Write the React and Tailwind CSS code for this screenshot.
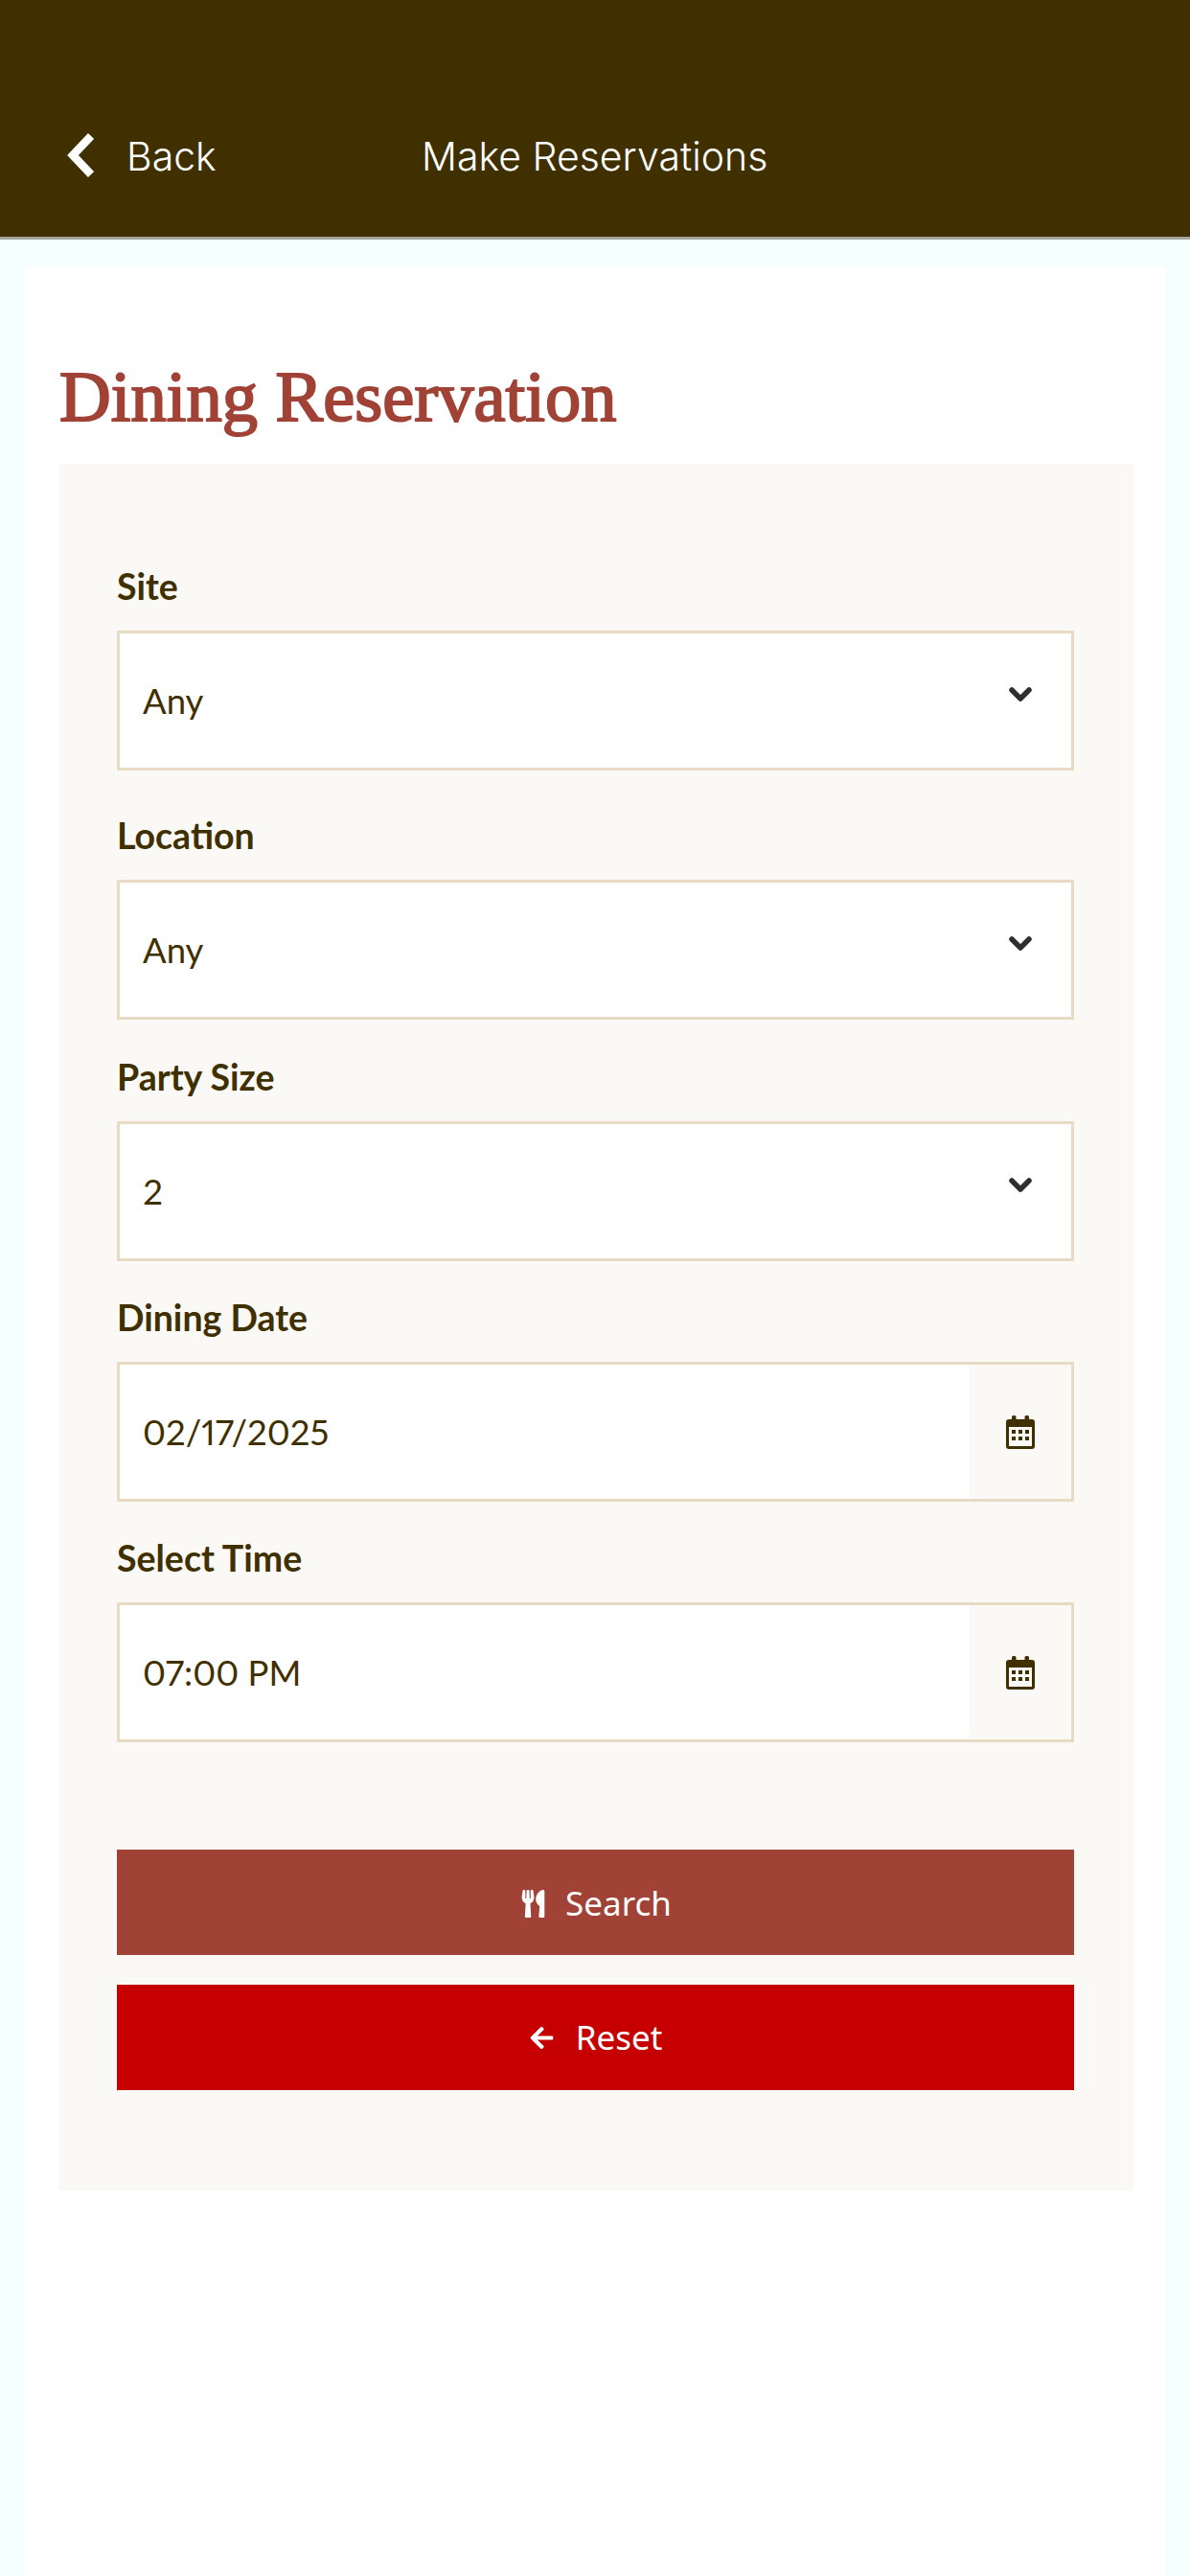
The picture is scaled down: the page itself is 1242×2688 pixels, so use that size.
import React from 'react';
import { FaArrowLeft, FaUtensils } from 'react-icons/fa';

const CalendarIcon = () => (
  <svg width="30" height="35" viewBox="0 0 30 35" className="text-[#403000]" fill="currentColor">
    <rect x="6" y="0" width="4.5" height="7" rx="1.5" />
    <rect x="19.5" y="0" width="4.5" height="7" rx="1.5" />
    <path fillRule="evenodd" d="M3 4h24a3 3 0 0 1 3 3v25a3 3 0 0 1-3 3H3a3 3 0 0 1-3-3V7a3 3 0 0 1 3-3Zm0 8v20h24V12Z" />
    <rect x="6" y="15" width="4" height="4" />
    <rect x="13" y="15" width="4" height="4" />
    <rect x="20" y="15" width="4" height="4" />
    <rect x="6" y="22" width="4" height="4" />
    <rect x="13" y="22" width="4" height="4" />
    <rect x="20" y="22" width="4" height="4" />
  </svg>
);

const SelectField = ({ label, value, className }) => (
  <div className={className}>
    <label className="block h-9 mb-[28px] text-[37.5px] leading-9 font-bold text-[#403000] font-['Lato',sans-serif]">{label}</label>
    <div className="relative">
      <select
        defaultValue={value}
        className="appearance-none block w-full h-[146px] pl-[24px] bg-white border-[3px] border-[#e8dac3] rounded-none text-[36.5px] text-[#403000] font-['Lato',sans-serif] outline-none"
      >
        <option>{value}</option>
      </select>
      <svg width="24" height="16" viewBox="0 0 24 16" className="absolute right-[44px] top-[59px] pointer-events-none">
        <polyline points="3,3 12,12 21,3" fill="none" stroke="#2e2e2e" strokeWidth="5.5" strokeLinecap="round" strokeLinejoin="round" />
      </svg>
    </div>
  </div>
);

const DateField = ({ label, value, className }) => (
  <div className={className}>
    <label className="block h-9 mb-[28px] text-[37.5px] leading-9 font-bold text-[#403000] font-['Lato',sans-serif]">{label}</label>
    <div className="flex h-[146px] bg-white border-[3px] border-[#e8dac3]">
      <input
        readOnly
        value={value}
        className="flex-1 min-w-0 pl-[24px] bg-white text-[36.5px] text-[#403000] font-['Lato',sans-serif] [font-variant-numeric:proportional-nums] outline-none"
      />
      <span className="flex items-center justify-center w-[106px] bg-[#fbf9f5]">
        <CalendarIcon />
      </span>
    </div>
  </div>
);

const App = () => {
  return (
    <div className="min-h-[2688px] flex flex-col bg-[#f5ffff]">
      <header className="flex items-center h-[250px] pt-[80px] bg-[#403000] border-b-[3px] border-[#a5a5a0] text-white font-['Inter',sans-serif] font-light text-[41px]">
        <svg width="30" height="48" viewBox="0 0 30 48" className="ml-[68px] -mt-[3px]">
          <polyline points="27,4 8,24 27,44" fill="none" stroke="#ffffff" strokeWidth="8.5" />
        </svg>
        <span className="ml-[34px] w-[308px]">Back</span>
        <span>Make Reservations</span>
      </header>

      <main className="flex-1 mt-[27px] ml-[25px] w-[1191px] bg-white">
        <h1 className="mt-[100px] ml-[37px] h-[107px] text-[74.5px] leading-[75px] [-webkit-text-stroke:2px_#a14236] text-[#a14236] font-['Liberation_Serif',serif]">
          Dining Reservation
        </h1>

        <div className="ml-[37px] w-[1121px] pt-[110px] pl-[60px] pr-[62px] pb-[105px] bg-[#fbf9f5]">
          <SelectField label="Site" value="Any" />
          <SelectField label="Location" value="Any" className="mt-[50px]" />
          <SelectField label="Party Size" value="2" className="mt-[42px]" />
          <DateField label="Dining Date" value="02/17/2025" className="mt-[41px]" />
          <DateField label="Select Time" value="07:00 PM" className="mt-[41px]" />

          <button
            type="button"
            className="flex items-center justify-center gap-[19px] w-full h-[110px] pt-[2px] mt-[112px] bg-[#a14236] text-white text-[35px] font-['Noto_Sans',sans-serif]"
          >
            <FaUtensils className="text-[29px]" />
            Search
          </button>
          <button
            type="button"
            className="flex items-center justify-center gap-[22px] w-full h-[110px] mt-[31px] bg-[#c60000] text-white text-[35px] font-['Noto_Sans',sans-serif]"
          >
            <FaArrowLeft className="text-[27px]" />
            Reset
          </button>
        </div>
      </main>
    </div>
  );
};

export default App;
